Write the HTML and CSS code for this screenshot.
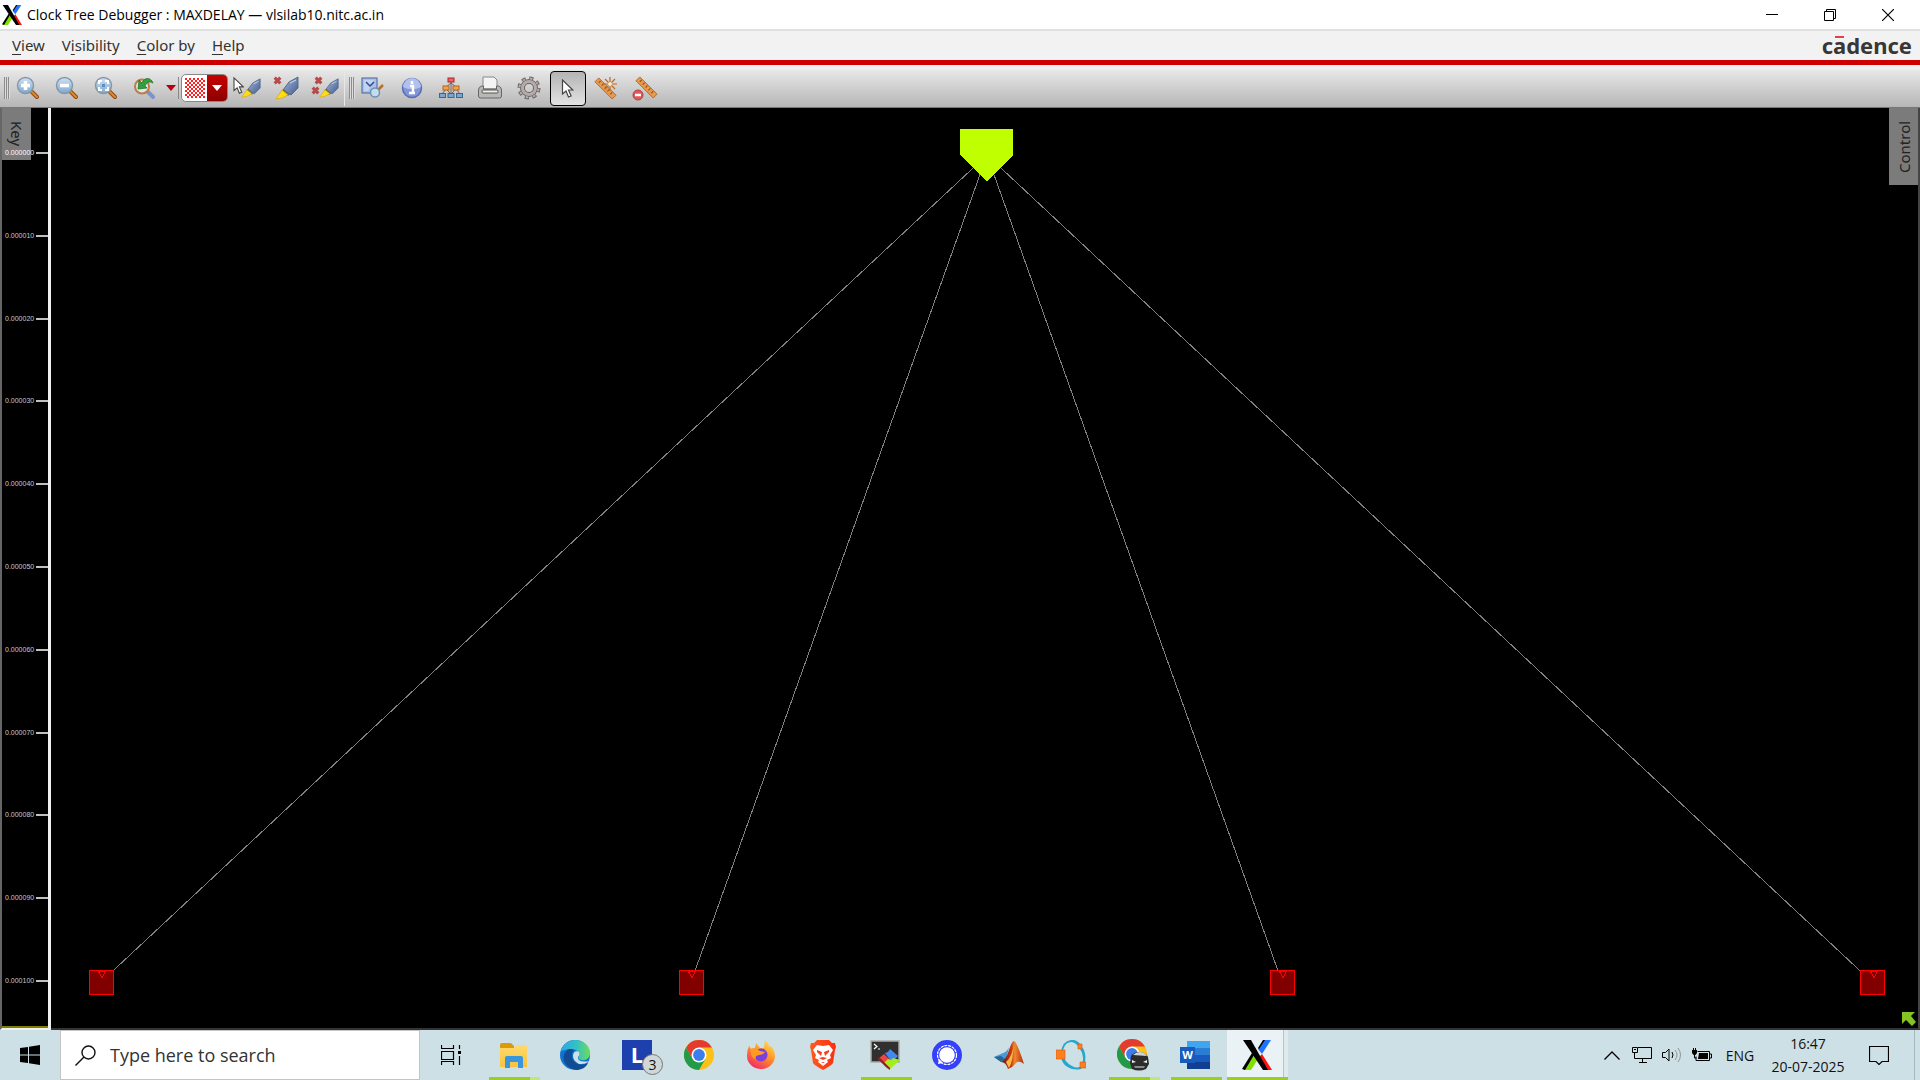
FILE: index.html
```html
<!DOCTYPE html>
<html lang="en">
<head>
<meta charset="utf-8">
<title>Clock Tree Debugger : MAXDELAY — vlsilab10.nitc.ac.in</title>
<link rel="stylesheet" href="styles.css">
</head>
<body>
<svg class="defs" aria-hidden="true">
  <defs>
    <linearGradient id="steel" x1="0" y1="0" x2="1" y2="1"><stop offset="0" stop-color="#a9b9d6"/><stop offset="1" stop-color="#3f5c92"/></linearGradient>
    <linearGradient id="lensFill" x1="0" y1="0" x2="0" y2="1"><stop offset="0" stop-color="#cfe2f3"/><stop offset="1" stop-color="#7fa8cf"/></linearGradient>
    <linearGradient id="edgeTop" x1="0" y1="0" x2="1" y2="0"><stop offset="0" stop-color="#2aa9ea"/><stop offset=".55" stop-color="#35c1c0"/><stop offset="1" stop-color="#6fdc5a"/></linearGradient>
    <linearGradient id="fox" x1="0.8" y1="0" x2="0.2" y2="1"><stop offset="0" stop-color="#ffe14a"/><stop offset=".5" stop-color="#ff8a2a"/><stop offset="1" stop-color="#f0216b"/></linearGradient>
    <linearGradient id="braveRed" x1="0" y1="0" x2="1" y2="0"><stop offset="0" stop-color="#ff5a1f"/><stop offset="1" stop-color="#fa2f10"/></linearGradient>
    <linearGradient id="folder" x1="0" y1="0" x2="0" y2="1"><stop offset="0" stop-color="#ffda6b"/><stop offset="1" stop-color="#f9c240"/></linearGradient>
    <linearGradient id="matlabRed" x1="0" y1="0" x2="1" y2="0"><stop offset="0" stop-color="#5a1414"/><stop offset=".45" stop-color="#c63a18"/><stop offset=".6" stop-color="#f08a2c"/><stop offset="1" stop-color="#b32a12"/></linearGradient>
    <pattern id="checks" width="4" height="4" patternUnits="userSpaceOnUse"><rect width="4" height="4" fill="#fff"/><rect width="2" height="2" fill="#ff2020"/><rect x="2" y="2" width="2" height="2" fill="#ff2020"/></pattern>
    <symbol id="lens" viewBox="0 0 24 24"><path d="M15 15l6 6" stroke="#8d4a10" stroke-width="4" stroke-linecap="round"/><path d="M15 15l6 6" stroke="#e08a2c" stroke-width="2" stroke-linecap="round"/><circle cx="9.500" cy="9.500" r="8" fill="url(#lensFill)" stroke="#8499a8" stroke-width="1.500"/></symbol>
    <symbol id="marker" viewBox="0 0 24 24"><path d="M8 14L14 6l9-5v11l-7 7z" fill="url(#steel)" stroke="#405a88" stroke-width=".8"/><path d="M15 7l6-3" stroke="#d0dcf0"/><path d="M9 13l6 6-3 1-6-5z" fill="#6b6b55"/><path d="M7 14l6 5-6 3-6 1z" fill="#ffdc18" stroke="#d9a800" stroke-width=".7"/></symbol>
    <symbol id="cross" viewBox="0 0 8 8"><path d="M1.500 1.500l5 5M6.500 1.500l-5 5" stroke="#b84a48" stroke-width="2.800"/></symbol>
    <symbol id="pointer" viewBox="0 0 12 20"><path d="M1 1v14l3.500-3 2.500 6 2.600-1-2.600-6h4.400z" fill="#fff" stroke="#444" stroke-width="1.200"/></symbol>
    <symbol id="ruler" viewBox="0 0 24 24"><path d="M1 5l4-4 18 18-4 4z" fill="#e79a4e" stroke="#b8691f"/><path d="M7 4L5 6M10 7L8 9M13 10l-2 2M16 13l-2 2M19 16l-2 2" stroke="#9c5413" stroke-width="1.200"/></symbol>
    <symbol id="xlogo" viewBox="0 0 30 30"><path d="M22 0h7L20 14l-4-5z" fill="#1f74ff"/><path d="M21 0h2L17 9l-1-1z" fill="#000"/><path d="M1 29l11-15 4 5-7 11H3z" fill="#7fe000"/><path d="M0 29l10-16 2 2L3 30z" fill="#000"/><path d="M20 14l10 16h-8l-7-11z" fill="#ff1010"/><path d="M1 0h8l17 30h-5z" fill="#000"/></symbol>
    <symbol id="chrome" viewBox="0 0 30 30"><circle cx="15" cy="15" r="15" fill="#fbc116"/><path d="M2 7.500A15 15 0 0 1 28 7.500H15L8.500 19z" fill="#e33b2e"/><path d="M2 7.500A15 15 0 0 0 15 30l6.500-11.250H8.500z" fill="#229a48"/><circle cx="15" cy="15" r="7.500" fill="#fff"/><circle cx="15" cy="15" r="5.900" fill="#3b7ded"/></symbol>
  </defs>
</svg>

<div class="window">
  <header class="titlebar">
    <svg class="app-icon" viewBox="0 0 30 30"><use href="#xlogo"/></svg>
    <h1 class="title">Clock Tree Debugger : MAXDELAY — vlsilab10.nitc.ac.in</h1>
    <div class="window-buttons">
      <button class="window-button" aria-label="Minimize"><svg width="12" height="12" viewBox="0 0 12 12"><path d="M0 5.500h12" stroke="#000"/></svg></button>
      <button class="window-button" aria-label="Restore"><svg width="12" height="12" viewBox="0 0 12 12" fill="none" stroke="#000"><path d="M.5 2.500h9v9h-9zM2.500 2.500v-2h9v9h-2"/></svg></button>
      <button class="window-button" aria-label="Close"><svg width="12" height="12" viewBox="0 0 12 12"><path d="M0 0l12 12M12 0L0 12" stroke="#000" stroke-width="1.200"/></svg></button>
    </div>
  </header>

  <nav class="menubar">
    <button class="menu-item"><u>V</u>iew</button>
    <button class="menu-item">V<u>i</u>sibility</button>
    <button class="menu-item"><u>C</u>olor by</button>
    <button class="menu-item"><u>H</u>elp</button>
    <span class="brand">c<span class="brand-a">a</span>dence</span>
  </nav>

  <div class="toolbar">
    <span class="grip"></span>
    <div class="tools">
      <button class="tool" aria-label="Zoom in"><svg viewBox="0 0 24 24"><use href="#lens"/><path d="M9.500 5v9M5 9.500h9" stroke="#fff" stroke-width="3.500"/></svg></button>
      <button class="tool" aria-label="Zoom out"><svg viewBox="0 0 24 24"><use href="#lens"/><path d="M5 9.500h9" stroke="#fff" stroke-width="3.500"/></svg></button>
      <button class="tool" aria-label="Zoom fit"><svg viewBox="0 0 24 24"><use href="#lens"/><path d="M5 8V5h3M11 5h3v3M14 11v3h-3M8 14H5v-3" stroke="#fff" stroke-width="2" fill="none"/><rect x="8" y="8" width="3" height="3" fill="#5d8cc4"/></svg></button>
      <button class="tool" aria-label="Previous view"><svg viewBox="0 0 24 24"><path d="M15 16l5 5" stroke="#7d93cc" stroke-width="4" stroke-linecap="round"/><circle cx="9" cy="10.500" r="7" fill="#dfe6ea" stroke="#c07a42" stroke-width="2"/><path d="M5 13l1-9 3 3C11 1 18 1 20 7c-4-2-6-1-8 3l2 2z" fill="#2fa03c" stroke="#1a6e28" stroke-width=".7"/></svg></button>
    </div>
    <button class="caret-button" aria-label="View history"><svg width="10" height="6" viewBox="0 0 10 6"><path d="M0 0h10L5 6z" fill="#b4000c"/></svg></button>
    <span class="divider"></span>
    <button class="swatch" aria-label="Highlight pattern"><span class="swatch-sample"><svg width="20" height="20"><rect width="20" height="20" fill="url(#checks)"/></svg></span><span class="swatch-arrow"><svg width="10" height="6" viewBox="0 0 10 6"><path d="M0 0h10L5 6z" fill="#fff"/></svg></span></button>
    <div class="tools">
      <button class="tool" aria-label="Highlight selected"><svg class="wide" viewBox="0 0 28 24"><use href="#marker" x="8" y="1" width="20" height="22"/><use href="#pointer" x="0" y="1" width="11" height="18"/></svg></button>
      <button class="tool" aria-label="Clear highlight"><svg class="wide" viewBox="0 0 28 24"><use href="#marker" x="3" y="0" width="24" height="24"/><use href="#cross" x="1" y="0" width="9" height="9"/></svg></button>
      <button class="tool" aria-label="Clear all highlights"><svg class="wide" viewBox="0 0 28 24"><use href="#marker" x="8" y="1" width="20" height="22"/><use href="#cross" x="3" y="0" width="9" height="9"/><use href="#cross" x="0" y="10" width="9" height="9"/></svg></button>
    </div>
    <span class="divider light"></span>
    <span class="grip"></span>
    <div class="tools">
      <button class="tool" aria-label="Find"><svg viewBox="0 0 24 24"><rect x="1" y="2" width="15" height="15" fill="#a9c1ea" stroke="#48639c"/><path d="M3 4h10l-6 11H3z" fill="#d4e1f7" opacity=".6"/><path d="M5 6l4 4 4-4" stroke="#344d88" stroke-width="1.500" fill="none"/><path d="M17 14l5-5" stroke="#b5702c" stroke-width="2.500"/><circle cx="14" cy="16.500" r="4.500" fill="#c4dcee" stroke="#6e92b4" stroke-width="1.500"/></svg></button>
      <button class="tool" aria-label="Information"><svg viewBox="0 0 24 24"><circle cx="12" cy="12" r="9.500" fill="#8196d8" stroke="#5a6db4" stroke-width="1.500"/><path d="M3 11a9 9 0 0 1 18 0c-6 3-12 3-18 0z" fill="#b2c0ec"/><path d="M10 10h3v7M9 17h6M12 5v3" stroke="#fff" stroke-width="2.500" fill="none"/></svg></button>
      <button class="tool" aria-label="Hierarchy"><svg viewBox="0 0 24 24"><path d="M12 5v14M7 11l5-4 5 4M3 18l4-5 5 5 5-5 4 5" stroke="#666" fill="none"/><rect x="9" y="2" width="6" height="4" fill="#f26060" stroke="#a92626"/><g fill="#f3a24c" stroke="#b5651a"><rect x="4" y="10" width="6" height="4"/><rect x="14" y="10" width="6" height="4"/></g><g fill="#7ba6d0" stroke="#3d658f"><rect x=".5" y="17.500" width="6" height="4"/><rect x="9" y="17.500" width="6" height="4"/><rect x="17.500" y="17.500" width="6" height="4"/></g></svg></button>
      <button class="tool" aria-label="Print"><svg viewBox="0 0 24 24"><path d="M5 13V1h11l3 3v9z" fill="#f4f4f4" stroke="#888"/><path d="M0.500 14q0-3 3-4h2v3h13v-3h2q3 1 3 4v6q0 2-2 2h-19q-2 0-2-2z" fill="#b8b8b4" stroke="#666"/><rect x="4" y="14" width="16" height="3" rx="1" fill="#eee" stroke="#555"/></svg></button>
      <button class="tool" aria-label="Settings"><svg viewBox="0 0 24 24"><circle cx="12" cy="12" r="9.500" fill="none" stroke="#6c6464" stroke-width="4" stroke-dasharray="4 3.460"/><circle cx="12" cy="12" r="6.500" fill="none" stroke="#6c6464" stroke-width="5"/><circle cx="12" cy="12" r="9.500" fill="none" stroke="#b4acac" stroke-width="2" stroke-dasharray="2.500 4.960" stroke-dashoffset="-.7"/><circle cx="12" cy="12" r="6.500" fill="none" stroke="#b4acac" stroke-width="3"/></svg></button>
      <button class="tool selected" aria-label="Select" aria-pressed="true"><svg viewBox="0 0 24 24"><use href="#pointer" x="5" y="3" width="13" height="20"/></svg></button>
      <button class="tool" aria-label="Measure"><svg viewBox="0 0 24 24"><use href="#ruler" x="-1" y="1" width="23" height="23"/><path d="M15 1v14M8 8h14M10 3l10 10M20 3L10 13" stroke="#b86a28" stroke-width="1.200"/><circle cx="15" cy="8" r="2" fill="#fff0c8"/></svg></button>
      <button class="tool" aria-label="Remove measurements"><svg viewBox="0 0 24 24"><use href="#ruler" x="1" y="0" width="23" height="23"/><circle cx="4" cy="19" r="5" fill="#de5a5a" stroke="#b04040"/><path d="M1 19h6" stroke="#fff" stroke-width="2.500"/></svg></button>
    </div>
  </div>

  <main class="workspace">
    <aside class="scale">
      <button class="side-tab key-tab">Key</button>
      <ol class="ticks">
        <li class="tick">0.000000</li>
        <li class="tick">0.000010</li>
        <li class="tick">0.000020</li>
        <li class="tick">0.000030</li>
        <li class="tick">0.000040</li>
        <li class="tick">0.000050</li>
        <li class="tick">0.000060</li>
        <li class="tick">0.000070</li>
        <li class="tick">0.000080</li>
        <li class="tick">0.000090</li>
        <li class="tick">0.000100</li>
      </ol>
    </aside>
    <section class="canvas">
      <svg class="tree" viewBox="51 108 1867 920" role="img" aria-label="Clock tree">
        <path d="M987 155L101 982M987 155L691 982M987 155L1282 982M987 155L1872 982" stroke="#808080" fill="none"/>
        <path d="M960 129h53v26l-26 26-27-26z" fill="#bfff00"/>
        <g class="sinks">
          <path d="M89.500 970.500h24v24h-24zM98.500 971.500h7l-3.500 6z"/>
          <path d="M679.500 970.500h24v24h-24zM688.500 971.500h7l-3.500 6z"/>
          <path d="M1270.500 970.500h24v24h-24zM1279.500 971.500h7l-3.500 6z"/>
          <path d="M1860.500 970.500h24v24h-24zM1870.500 971.500h7l-3.500 6z"/>
        </g>
      </svg>
      <button class="side-tab control-tab">Control</button>
      <button class="corner" aria-label="Full view"><svg width="17" height="16" viewBox="0 0 17 16"><path d="M1 1h13l-4 4 5 6-4 4-6-6-4 4z" fill="#84c422"/></svg></button>
    </section>
  </main>
</div>

<footer class="taskbar">
  <button class="start" aria-label="Start"><svg width="20" height="20" viewBox="0 0 20 20"><path d="M0 3l8-1v7.500H0zM9 1.800L20 0v9.500H9zM0 10.500h8V18l-8-1zM9 10.500h11V20L9 18.200z"/></svg></button>
  <label class="search">
    <svg width="21" height="21" viewBox="0 0 21 21" fill="none" stroke="#111" stroke-width="1.400"><circle cx="13.500" cy="7.500" r="6.500"/><path d="M9 12l-8.500 8.500"/></svg>
    <input class="search-input" type="text" placeholder="Type here to search" aria-label="Search">
  </label>
  <div class="apps">
    <button class="app" aria-label="Task view"><svg width="20" height="20" viewBox="0 0 20 20" fill="none" stroke="#000"><path d="M.5 0v3.500h12V0M.5 20v-3.500h12V20M.5 6.500h12v8H.5zM18.500 0v4M18.500 11v9" stroke-width="1.200"/><path d="M17 6h3v3h-3z" fill="#000" stroke="none"/></svg></button>
    <button class="app running more" aria-label="File Explorer"><svg width="30" height="30" viewBox="0 0 30 30"><path d="M2 5q0-2 2-2h9l3 3v4H2z" fill="#dd9a08"/><path d="M2 8h14l2-3h11v22H2z" fill="url(#folder)"/><path d="M7 28V18q0-2 2-2h14q2 0 2 2v10h-5v-6h-8v6z" fill="#3796dc"/></svg></button>
    <button class="app" aria-label="Microsoft Edge"><svg width="30" height="30" viewBox="0 0 30 30"><circle cx="15" cy="15" r="15" fill="#1173cc"/><path d="M1 11C3 4 9 0 15 0c9 0 15 6 15 13 0 6-5 8-9 7-4-1-2-2-2-5 0-4-4-6-8-6-5 0-9 2-10 2z" fill="url(#edgeTop)"/><path d="M9 9c-5 3-7 8-4 14 3 5 9 7 13 7 5-1 8-3 10-7-5 3-12 2-15-3-2-4-1-8 1-10-2-1-3-1-5-1z" fill="#114b94"/><path d="M19 12c-3-2-6 0-6 4 0 3 2 6 6 8 4 0 7 0 10-3-3 1-11 1-11-3 0-2 2-2 1-6z" fill="#cde0e6"/></svg></button>
    <button class="app" aria-label="L, 3 notifications"><span class="letter-icon">L<span class="badge">3</span></span></button>
    <button class="app" aria-label="Google Chrome"><svg width="30" height="30"><use href="#chrome"/></svg></button>
    <button class="app" aria-label="Firefox"><svg width="30" height="30" viewBox="0 0 30 30"><path d="M3 6l2 3 4-1 1-5 4 5 4 0 1-8q3 3 5 7l1-1q4 5 4 10a14 13 0 0 1-28 0Q1 10 3 6z" fill="url(#fox)"/><circle cx="15" cy="15" r="6.500" fill="#7b3fe0"/><path d="M4 9q6-2 10 2l5 1q-2 3-6 3-5 1-3 5-5-3-5-7z" fill="#ff9a22"/></svg></button>
    <button class="app" aria-label="Brave"><svg width="30" height="30" viewBox="0 0 30 30"><path d="M9 0h12l3 3 3 0 1 4-1 3-2 13q-1 2-10 7-9-5-10-7L3 10 2 7l1-4h3z" fill="url(#braveRed)"/><path d="M9 5l6 1 6-1 4 5-3 5 1 3-4 2 1 2-5 4-5-4 1-2-4-2 1-3-3-5z" fill="#fff"/><path d="M9 10l5 2-1 4-4-4zM21 10l-5 2 1 4 4-4zM11 18l4 2 4-2-4-1zM13 22h4l-2 1z" fill="#fa4018"/></svg></button>
    <button class="app running" aria-label="MobaXterm"><svg width="30" height="30" viewBox="0 0 30 30"><rect x="1" y="1" width="28" height="21" fill="#303030" stroke="#aaa" stroke-width="1.500"/><path d="M4 4l3 2.500L4 9M8 9h2" stroke="#fff" stroke-width="1.200" fill="none"/><path d="M8 19l6-5 7 7-5 6z" fill="#f04444"/><path d="M15 13l3-1 2-3 8 7-5 5-3-1-2-3z" fill="#4389f2"/><path d="M14 23l4-4 3 1 2-2 7 2-10 9z" fill="#a4ec20"/><path d="M8 19l9 9 3 2v-2L9 17z" fill="#8f1d1d"/></svg></button>
    <button class="app" aria-label="Signal"><svg width="30" height="30" viewBox="0 0 30 30"><circle cx="15" cy="15" r="15" fill="#3440fa"/><circle cx="15" cy="15" r="9.500" fill="none" stroke="#fff" stroke-width="1.200" stroke-dasharray="3 .8"/><path d="M6 24l1-5 4 4z" fill="#fff"/><circle cx="15" cy="15" r="7.800" fill="#fff"/></svg></button>
    <button class="app" aria-label="MATLAB"><svg width="30" height="30" viewBox="0 0 30 30"><path d="M0 17l9-4q4-1 6-6l-3 13-5 2z" fill="#4b9ad4"/><path d="M0 17l7 5 4-3-4-3z" fill="#266794"/><path d="M7 22q5-2 8-12 3-9 5-9 3 1 10 23-5-4-8-1-3 4-8 6-2-7-7-7z" fill="url(#matlabRed)"/><path d="M15 28q4-6 5-26-1 14-8 20z" fill="#ffb640"/></svg></button>
    <button class="app" aria-label="GNU Octave"><svg width="30" height="30" viewBox="0 0 30 30"><path d="M15 0q7-1 11 7l2 3q4 11-3 19-8 2-15-3-6-5-5-13Q6 1 15 0zM15 2Q7 3 7 13q1 9 9 13 7 4 10-2 3-8-2-15-4-7-9-7z" fill="#28a6cc" fill-rule="evenodd"/><path d="M0 10h9v9H0zM22 4h4v5h-4zM24 22h6v6h-6z" fill="#ff7f1e" stroke="#d05a10" stroke-width=".6"/></svg></button>
    <button class="app running more" aria-label="Google Chrome, second profile"><svg width="32" height="32" viewBox="0 0 32 32"><use href="#chrome" width="30" height="30"/><path d="M14 17q3-4 8-4 7 0 9 5l1 7-3 5q-7 3-14 0l-2-6z" fill="#2c2c2c"/><path d="M16 16q3-3 7-3 5 0 7 4z" fill="#d2d2d2"/><path d="M15 21l4 2-4 1zM30 21l-4 2 4 1z" fill="#eee"/><path d="M17 27h11l-1 2h-9z" fill="#8a8a8a"/></svg></button>
    <button class="app running" aria-label="Word"><span class="word-icon"><span class="word-letter">W</span></span></button>
    <button class="app running active" aria-label="Clock Tree Debugger"><svg width="30" height="30"><use href="#xlogo"/></svg></button>
  </div>
  <div class="tray">
    <button class="tray-button" aria-label="Show hidden icons"><svg width="16" height="9" viewBox="0 0 16 9" fill="none" stroke="#000" stroke-width="1.300"><path d="M.5 8.500L8 1l7.500 7.500"/></svg></button>
    <button class="tray-button" aria-label="Network"><svg width="20" height="17" viewBox="0 0 20 17" fill="none" stroke="#000"><path d="M6 .5h13.500v11H2.500V6M10.500 12v4M7 15.500h8M.5.5h5v5h-5zM2 2.500h2"/></svg></button>
    <button class="tray-button" aria-label="Volume"><svg width="20" height="16" viewBox="0 0 20 16" fill="none" stroke="#000"><path d="M.5 5.500h3L7 2v12l-3.500-3.500h-3zM10 5q2 3 0 6"/><path d="M13 3q4 5 0 10M16 1q5 7 0 14" stroke="#8b989c"/></svg></button>
    <button class="tray-button" aria-label="Battery"><svg width="20" height="14" viewBox="0 0 20 14"><path d="M5.500 3.500h12v9H4v-4M18 6h1.500v4H18" fill="none" stroke="#000"/><path d="M7 5h9v6H6zM0 2h5v3L3.500 7h-2L0 5z"/><path d="M1.500 0v3M3.500 0v3M2.500 6v4h2" stroke="#000" fill="none"/></svg></button>
    <button class="tray-button language">ENG</button>
    <button class="clock"><span>16:47</span><span>20-07-2025</span></button>
    <button class="notifications" aria-label="Notifications"><svg width="20" height="20" viewBox="0 0 20 20" fill="none" stroke="#000" stroke-width="1.200"><path d="M.5 1.500h19v15H13l-3 3-3-3H.5z"/></svg></button>
  </div>
</footer>
</body>
</html>
```
FILE: styles.css
```css
* { box-sizing: border-box; }

body {
  margin: 0;
  min-height: 100vh;
  display: flex;
  flex-direction: column;
  font-family: "Noto Sans", sans-serif;
  background: #000;
}

button {
  padding: 0;
  border: 0;
  background: none;
  font: inherit;
  color: inherit;
}

svg { display: block; }

.defs { position: absolute; width: 0; height: 0; }

.window { flex: 1; display: flex; flex-direction: column; }

.titlebar {
  display: flex;
  align-items: center;
  height: 29px;
  padding-left: 2px;
  background: #fff;
}
.app-icon { width: 20px; height: 20px; }
.title {
  flex: 1;
  margin: 0 0 0 5px;
  font-family: "Open Sans", sans-serif;
  font-size: 14px;
  font-weight: 400;
  line-height: 20px;
}
.window-buttons { display: flex; padding-right: 3px; }
.window-button { width: 58px; height: 28px; display: grid; place-items: center; }

.menubar {
  display: flex;
  align-items: center;
  gap: 17px;
  height: 31px;
  padding: 0 8px 2px 12px;
  background: #f2f2f2;
  border-top: 2px solid #dde1df;
  font-size: 15px;
  line-height: 20px;
  color: #333;
}
.menu-item u { text-underline-offset: 3px; }
.brand { margin-left: auto; font-size: 22px; font-weight: 700; line-height: 26px; color: #3a3636; }
.brand-a { position: relative; }
.brand-a::after {
  content: "";
  position: absolute;
  left: 2px;
  right: 2px;
  top: 6px;
  height: 2px;
  background: #e2404a;
}

.toolbar {
  display: flex;
  align-items: center;
  height: 48px;
  padding: 4px 0 0 4px;
  border-top: 5px solid #cc0000;
  border-bottom: 1px solid #777;
  background: linear-gradient(#f0f0f0 4px, #e6e6e6 6px, #b6b6b6);
}
.tools { display: flex; gap: 3px; }
.grip {
  width: 6px;
  height: 22px;
  background: repeating-linear-gradient(90deg, #8c8c8c 0 1px, #dcdcdc 1px 2px);
}
.divider { width: 1px; height: 22px; background: #888; }
.divider.light { height: 36px; margin: 0 4px 0 1px; background: #e8e8e8; }
.tool {
  width: 36px;
  height: 35px;
  display: grid;
  place-items: center;
}
.tool svg { width: 24px; height: 24px; overflow: visible; }
.tool .wide { width: 28px; }
.tool.selected {
  border: 1px solid #000;
  border-radius: 4px;
  background: linear-gradient(#b4b4b4, #e2e2e2);
}
.caret-button { width: 15px; height: 24px; display: grid; place-items: center; }
.swatch {
  display: flex;
  width: 47px;
  height: 28px;
  margin: 0 1px 0 2px;
  border: 1px solid #888;
  border-radius: 5px;
  overflow: hidden;
  background: #fff;
}
.swatch-sample { flex: 1; height: 100%; display: grid; place-items: center; }
.swatch-arrow {
  width: 20px;
  height: 100%;
  display: grid;
  place-items: center;
  background: linear-gradient(#c80000, #8c0000);
}

.workspace { flex: 1; display: flex; background: #000; }

.scale {
  position: relative;
  display: flex;
  width: 51px;
  border-left: 2px solid #666;
  border-right: 3px solid #f0f0f0;
  border-bottom: 2px solid #f0f0f0;
}
.scale::after {
  content: "";
  position: absolute;
  left: 0;
  right: 0;
  bottom: 0;
  height: 2px;
  background: #808000;
}
.ticks {
  position: relative;
  flex: 1;
  display: flex;
  flex-direction: column;
  justify-content: space-between;
  margin: 0;
  padding: 42px 0 44px 3px;
  list-style: none;
}
.tick {
  display: flex;
  align-items: center;
  gap: 2px;
  height: 6px;
  font-family: "Liberation Sans", sans-serif;
  font-size: 7px;
  line-height: 6px;
  color: #c8c8c8;
}
.tick:first-child { color: #fff; }
.tick::after { content: ""; flex: 1; height: 2px; background: #c0c0c0; }

.side-tab {
  position: absolute;
  top: 0;
  width: 29px;
  background: #7b7b7b;
  font-size: 15px;
  line-height: 28px;
  color: #222;
  writing-mode: vertical-rl;
}
.key-tab { left: 0; height: 52px; }
.control-tab { right: 0; height: 77px; transform: rotate(180deg); }

.canvas {
  position: relative;
  flex: 1;
  min-width: 0;
  border-right: 2px solid #444;
  border-bottom: 2px solid #333;
}
.tree { width: 100%; height: auto; shape-rendering: crispEdges; }
.sinks { fill: #800000; stroke: #f00; }
.corner { position: absolute; right: 0; bottom: 1px; background: #000; }

.taskbar {
  display: flex;
  height: 50px;
  background: #cde0e6;
  color: #111;
  font-family: "Open Sans", sans-serif;
}
.start { width: 60px; display: grid; place-items: center; }
.search {
  display: flex;
  align-items: center;
  gap: 14px;
  width: 360px;
  padding-left: 14px;
  border: 1px solid #c4c4c4;
  background: #fff;
}
.search-input {
  flex: 1;
  min-width: 0;
  border: 0;
  padding: 0;
  outline: 0;
  background: none;
  font-family: "Open Sans", sans-serif;
  font-size: 18px;
  line-height: 24px;
}
.search-input::placeholder { color: #333; opacity: 1; }

.apps { display: flex; }
.app { position: relative; width: 62px; display: grid; place-items: center; }
.running::after {
  content: "";
  position: absolute;
  left: 7px;
  right: 4px;
  bottom: 0;
  height: 3px;
  background: #9acd26;
}
.running.more::after { background: linear-gradient(90deg, #9acd26 80%, #c2e57c 80%); }
.running.active::after { left: 1px; right: 0; }
.active { background: linear-gradient(90deg, transparent 1px, #ebf2f5 1px 57px, #b5c4c9 57px 58px, #dfeaee 58px); }
.letter-icon {
  position: relative;
  width: 30px;
  height: 30px;
  background: #1e3fae;
  color: #fff;
  font-size: 22px;
  font-weight: 700;
  line-height: 28px;
}
.badge {
  position: absolute;
  left: 20px;
  top: 14px;
  width: 21px;
  height: 21px;
  border: 1px solid #777;
  border-radius: 50%;
  background: #d0d7da;
  color: #111;
  font-size: 14px;
  font-weight: 400;
  line-height: 19px;
}
.word-icon {
  position: relative;
  width: 30px;
  height: 28px;
  border-left: 7px solid transparent;
  background: linear-gradient(#40a5ee 25%, #2b7cd3 25% 50%, #185abd 50% 75%, #103f91 75%) padding-box;
}
.word-letter {
  position: absolute;
  left: -7px;
  top: 6px;
  width: 15px;
  height: 16px;
  background: #185abd;
  color: #fff;
  font-size: 11px;
  font-weight: 700;
  line-height: 16px;
}

.tray { display: flex; margin-left: auto; border-right: 1px solid #a9b8bd; margin-right: 5px; }
.tray-button { width: 30px; display: grid; place-items: center; }
.language { width: 46px; font-size: 14px; }
.clock {
  width: 90px;
  display: flex;
  flex-direction: column;
  justify-content: center;
  font-size: 14px;
  line-height: 23px;
}
.clock span { text-align: center; }
.notifications { width: 61px; padding-right: 9px; display: grid; place-items: center; }
```
